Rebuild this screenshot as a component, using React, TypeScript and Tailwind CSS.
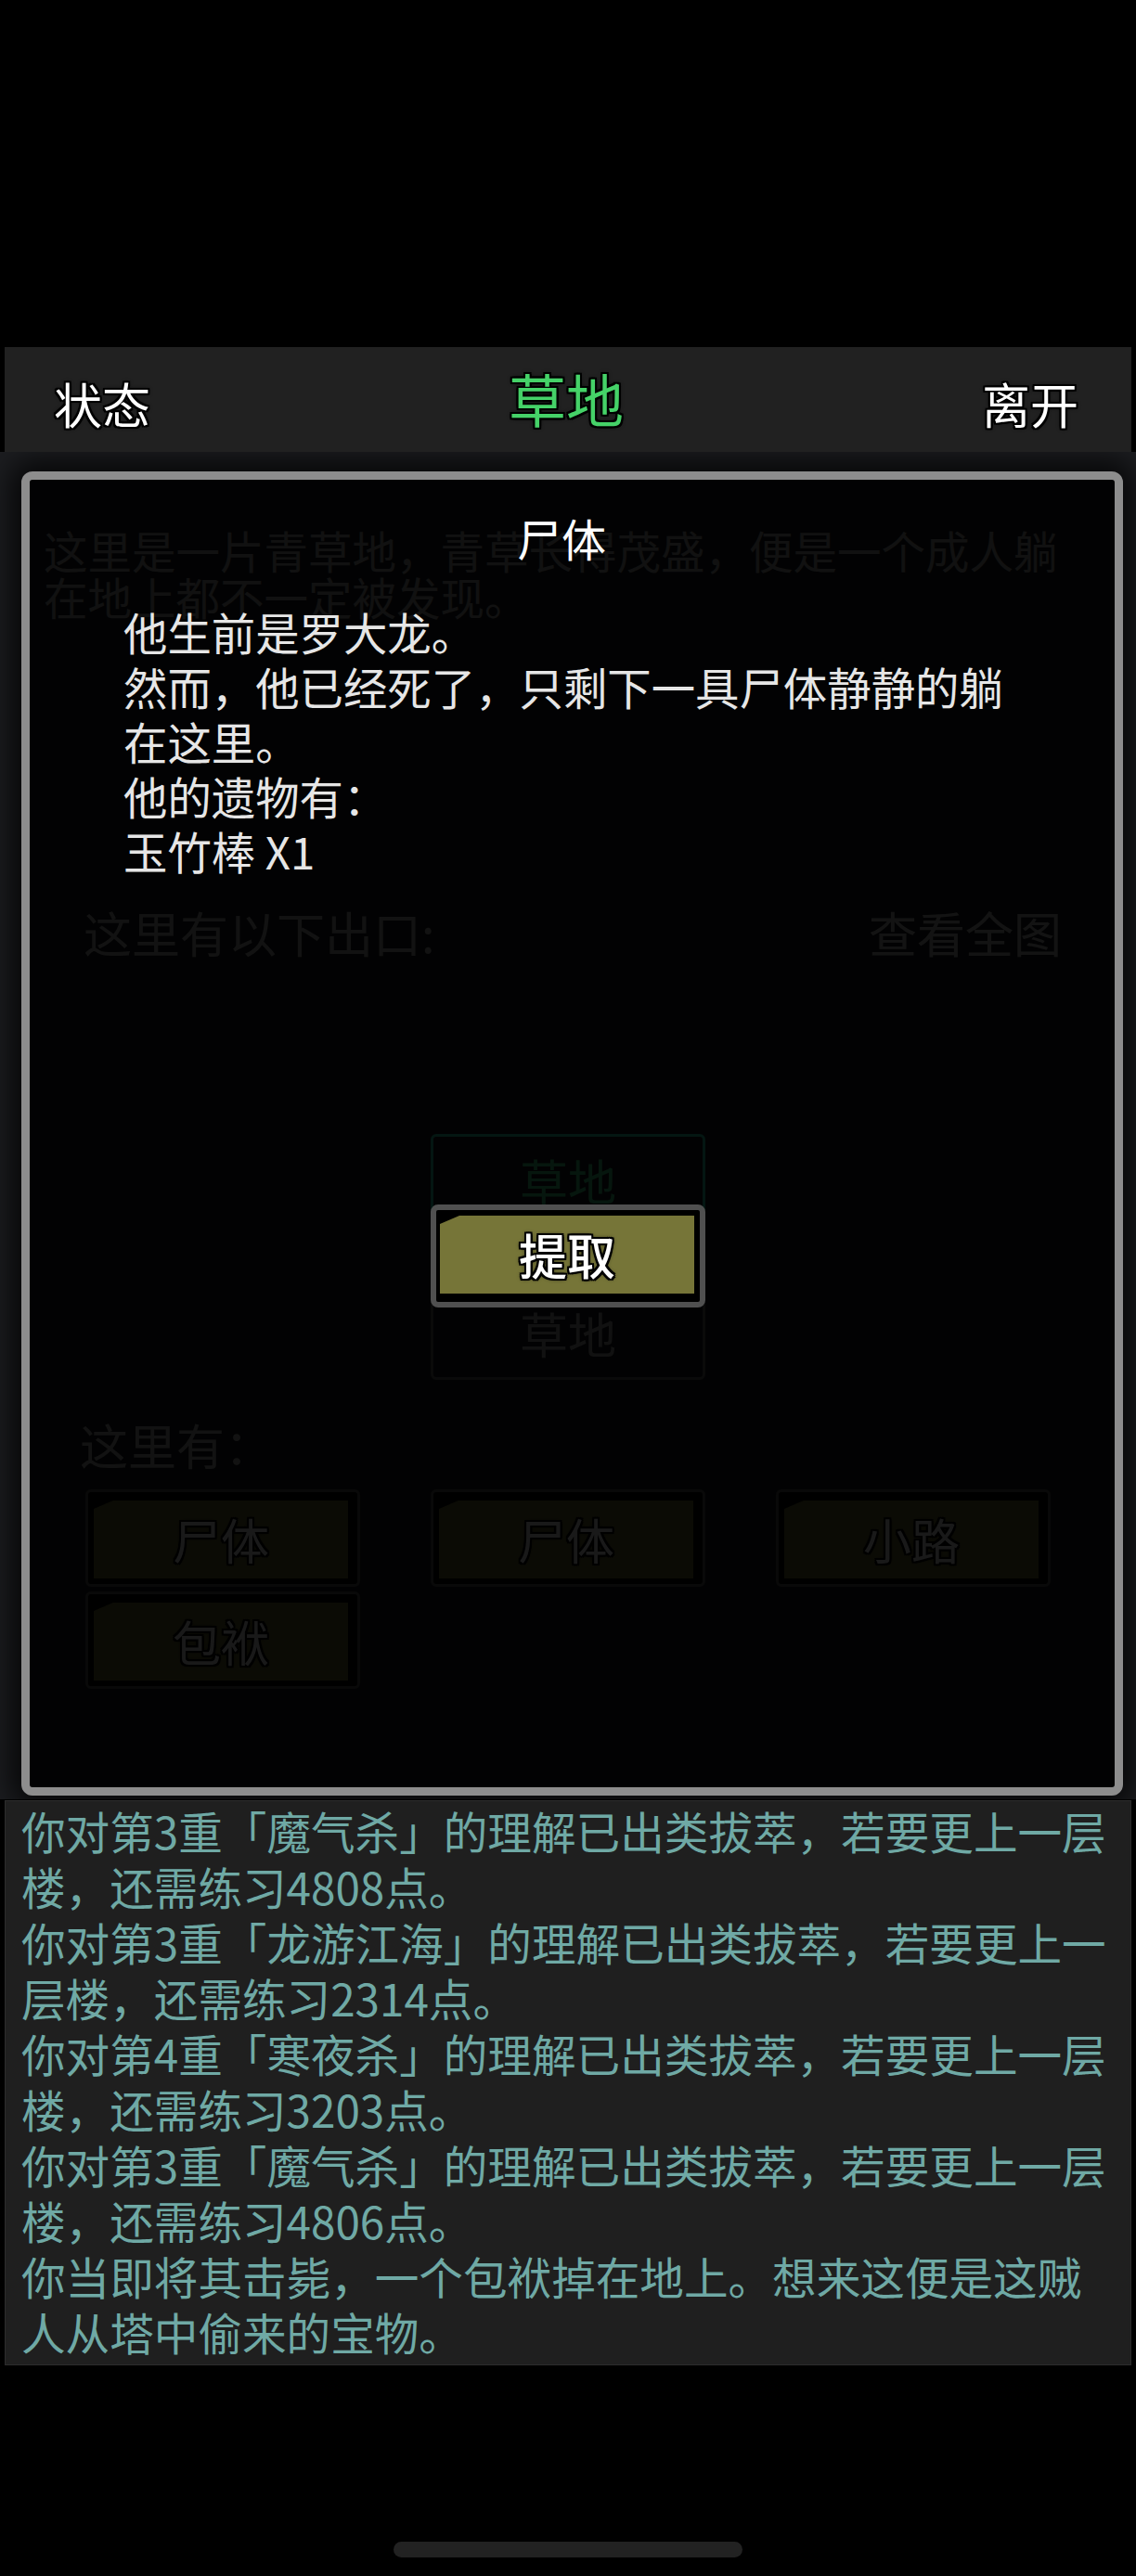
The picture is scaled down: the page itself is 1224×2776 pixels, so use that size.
import React from "react"

const outline =
  "[text-shadow:-2px_-2px_0_#000,2px_-2px_0_#000,-2px_2px_0_#000,2px_2px_0_#000,0_-2px_0_#000,0_2px_0_#000,-2px_0_0_#000,2px_0_0_#000,0_0_5px_#000]"

const notch = "[clip-path:polygon(21px_0,100%_0,100%_100%,0_100%,0_9px)]"

const logLines = [
  "你对第3重「魔气杀」的理解已出类拔萃，若要更上一层",
  "楼，还需练习4808点。",
  "你对第3重「龙游江海」的理解已出类拔萃，若要更上一",
  "层楼，还需练习2314点。",
  "你对第4重「寒夜杀」的理解已出类拔萃，若要更上一层",
  "楼，还需练习3203点。",
  "你对第3重「魔气杀」的理解已出类拔萃，若要更上一层",
  "楼，还需练习4806点。",
  "你当即将其击毙，一个包袱掉在地上。想来这便是这贼",
  "人从塔中偷来的宝物。",
]

const things = ["尸体", "尸体", "小路", "包袱"]

const Header = () => (
  <div className="mx-[5px] h-[113px] shrink-0 bg-[#212121] flex items-center justify-between pl-[53px] pr-[57px]">
    <span className={`text-[52px] leading-none text-white mt-[8px] ${outline}`}>状态</span>
    <span className={`text-[62px] leading-none text-[#45d268] -mt-[4px] ${outline}`}>草地</span>
    <span className={`text-[52px] leading-none text-white mt-[8px] ${outline}`}>离开</span>
  </div>
)

// the room page that sits under the dialog
const Room = () => (
  <div className="flex flex-col">
    <div className="pt-[81px] pl-[47px] text-[47.5px] leading-[50px] text-[#a8a8a8]">
      <div>这里是一片青草地，青草长得茂盛，便是一个成人躺</div>
      <div>在地上都不一定被发现。</div>
    </div>

    <div className="mt-[307px] pl-[90px] pr-[80px] flex justify-between text-[52px] leading-[60px] text-[#b4b4b4]">
      <span>这里有以下出口:</span>
      <span className="text-[#c4c4c4]">查看全图</span>
    </div>

    <div className="mt-[187px] ml-[464px] w-[296px] flex flex-col gap-[65px]">
      <div className="h-[100px] border-[3px] border-[#2ad9b6] rounded-[6px] flex items-center justify-center text-[52px] text-[#40e08a]">
        草地
      </div>
      <div className="h-[100px] border-[3px] border-[#6a6a6a] rounded-[6px] flex items-center justify-center text-[52px] text-[#b0b0b0]">
        草地
      </div>
    </div>

    <div className="mt-[40px] pl-[86px] text-[52px] leading-[60px] text-[#b4b4b4]">这里有：</div>

    <div className="mt-[18px] pl-[92px] grid grid-cols-[296px_296px_296px] gap-x-[76px] gap-y-[5px]">
      {things.map((t, i) => (
        <div key={i} className="h-[105px] border-[3px] border-[#5a5a5a] rounded-[6px] bg-black pt-[9px] pl-[6px] pr-[10px] pb-[6px]">
          <div className={`h-full bg-[#757437] ${notch} flex items-center justify-center text-[52px] text-white ${outline}`}>
            {t}
          </div>
        </div>
      ))}
    </div>
  </div>
)

const CorpseDialog = () => (
  <div className="absolute left-[23px] top-[21px] w-[1187px] h-[1427px] border-[9px] border-[#8d8d8d] rounded-[12px] bg-black/[0.9] shadow-[0_0_30px_12px_rgba(0,0,0,0.75)] flex flex-col">
    <div className="pt-[33px] pr-[23px] text-center text-[48px] leading-[59px] text-white">尸体</div>
    <div className="mt-[42px] pl-[101px] text-[47.4px] leading-[59px] text-[#e6e6e6]">
      <div>他生前是罗大龙。</div>
      <div>然而，他已经死了，只剩下一具尸体静静的躺</div>
      <div>在这里。</div>
      <div>他的遗物有：</div>
      <div>玉竹棒 X1</div>
    </div>
    <button className="mt-[352px] ml-[432px] w-[296px] h-[111px] border-[6px] border-[#505050] rounded-[8px] bg-black pt-[6px] pl-[4px] pr-[6px] pb-[9px]">
      <div className={`h-full bg-[#767538] ${notch} flex items-center justify-center text-[52px] font-medium text-white ${outline}`}>
        提取
      </div>
    </button>
  </div>
)

const LogPanel = () => (
  <div className="mx-[5px] mt-[1px] h-[609px] shrink-0 border border-[#2c2c2c] bg-[#1f1f1f] pl-[17px] pt-[2px] text-[47.6px] leading-[60px] text-[#6fa9a5] whitespace-nowrap">
    {logLines.map((l, i) => (
      <div key={i}>{l}</div>
    ))}
  </div>
)

export default function App() {
  return (
    <div className="font-['Noto_Sans_CJK_SC','Noto_Sans',sans-serif] w-[1224px] h-[2776px] bg-black flex flex-col overflow-hidden">
      <div className="h-[374px] shrink-0" />
      <Header />
      <div className="relative h-[1452px] shrink-0 bg-[#1c1d20] overflow-hidden">
        <Room />
        <CorpseDialog />
      </div>
      <LogPanel />
      <div className="mt-[190px] flex justify-center">
        <div className="w-[376px] h-[17px] rounded-full bg-[#222222]" />
      </div>
    </div>
  )
}
